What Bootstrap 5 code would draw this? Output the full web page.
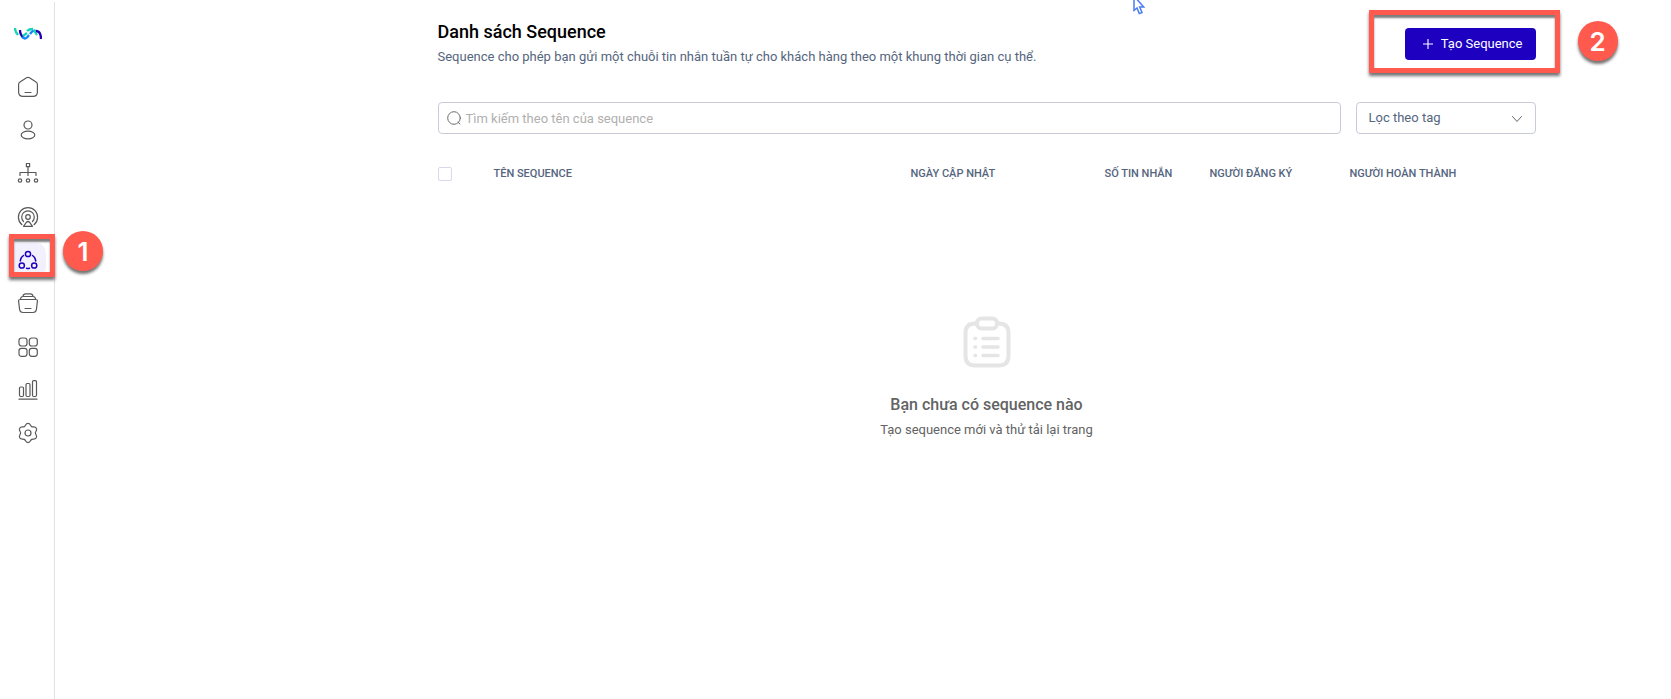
<!DOCTYPE html>
<html lang="vi">
<head>
<meta charset="utf-8">
<meta name="viewport" content="width=device-width, initial-scale=1">
<title>Danh sách Sequence</title>
<link href="https://cdn.jsdelivr.net/npm/bootstrap@5.3.0/dist/css/bootstrap.min.css" rel="stylesheet">
<style>
:root { --mark: #ff5a4d; --slate: #55657e; --brand: #1d00c0; }
body { font-family: Roboto, "Liberation Sans", sans-serif; font-size: 13px; line-height: 20px; color: #636363; }
svg { display: block; }
.rail { width: 55px; padding-left: 2px; border-right: 1px solid #e2e2e2; margin-top: 2px; }
.rail-logo { height: 63px; }
.rail-menu { display: grid; grid-auto-rows: 1fr; height: 390px; }
.rail-item { width: 36px; height: 34px; color: #595959; }
.rail-item.active { color: var(--brand); background: #f3f0fd; border-radius: 0 10px 10px 0; }
.rail-item svg { width: 22px; height: 22px; fill: none; stroke: currentColor; stroke-width: 1.2; stroke-linecap: round; stroke-linejoin: round; }
/* callouts laid over the page */
.mark-frame { position: absolute; border: 5px solid var(--mark); box-shadow: 0 3px 3px rgba(0,0,0,.55), inset 0 3px 2px rgba(0,0,0,.5); pointer-events: none; z-index: 3; }
.mark-dot { position: absolute; width: 40px; height: 40px; border-radius: 50%; background: var(--mark); color: #fff; font: 600 26px/42px Inter, "Liberation Sans", sans-serif; text-align: center; box-shadow: 0 3px 3px rgba(0,0,0,.55); z-index: 3; }
.frame-menu { inset: -9px -9px 0 -1px; }
.dot-menu { left: 53px; top: -12px; }
.frame-create { inset: -10px -24px -13px -36px; }
.dot-create { left: 173px; top: 1px; }
.workspace { padding-left: 247px; }
.sheet { max-width: 1098px; }
.page-head { padding-top: 20px; margin-bottom: 35px; }
.page-head h1 { font-size: 18px; line-height: 24px; font-weight: 500; color: #000; margin-bottom: 3px; }
.page-head p { color: var(--slate); }
.btn-create { width: 131px; height: 32px; background: var(--brand); color: #fff; font-size: 13px; border-radius: 4px; padding: 0 13px 0 16px; margin-top: 8px; }
.btn-create:hover { background: #2d12d0; color: #fff; }
.create-wrap { width: 131px; }
.filters { gap: 15px; }
.field { height: 32px; border: 1px solid #c9ccd6; border-radius: 4px; font-size: 13px; line-height: 20px; padding: 5px 12px; color: var(--slate); }
.search .field { padding-left: 27px; }
.search .field::placeholder { color: #b0b0b0; }
.search svg { position: absolute; left: 8px; top: 8px; }
.tag-filter { width: 180px; }
.tag-filter select { background: none; appearance: none; }
.tag-filter svg { position: absolute; right: 13px; top: 12px; pointer-events: none; }
.seq-table { table-layout: fixed; margin-top: 26px; }
.seq-table th { font-size: 11px; line-height: 16px; font-weight: 500; color: var(--slate); padding: 6px 0; border: 0; text-align: left; vertical-align: middle; white-space: nowrap; }
.seq-table .form-check-input { width: 14px; height: 14px; border: 1px solid #d5d9ea; border-radius: 2px; margin: 0; display: block; }
.empty { padding-top: 128px; }
.empty h2 { font-size: 16px; line-height: 24px; font-weight: 500; margin: 25px 0 3px; }
.pointer { position: absolute; left: 1132px; top: -5px; }
</style>
</head>
<body class="bg-white">
<div class="d-flex min-vh-100 position-relative">
  <nav class="rail flex-shrink-0" aria-label="Menu chính">
    <a href="#" class="rail-logo d-flex align-items-center justify-content-center" aria-label="Trang chủ">
      <svg width="28" height="14" viewBox="0 0 28 14" fill="none" stroke-width="2.3">
        <path d="M1 1c0 3 1 5 3 7" stroke="#16d5b4"/>
        <path d="M6 3c0 3 1 6 4 8" stroke="#2400b5"/>
        <path d="M9 9l4-3M13 4c2-2 4-2 6-2" stroke="#16d5b4"/>
        <path d="M8 10c3 3 5 1 7-2M16 7c2-3 4-4 6-3" stroke="#1587fb"/>
        <path d="M20 3c1 2 2 4 3 5" stroke="#16d5b4"/>
        <path d="M22 4c4 0 5 4 5 8" stroke="#2400b5"/>
      </svg>
    </a>
    <ul class="rail-menu list-unstyled mb-0">
      <li class="d-flex align-items-center justify-content-center"><a href="#" aria-label="Tổng quan" class="rail-item d-flex align-items-center justify-content-center">
        <svg viewBox="0 0 22 22"><path d="M1.600 8.500Q1.600 6.800 3 6l6.500-4.200Q11 1 12.500 1.800L19 6q1.400.8 1.400 2.500v7.500q0 4.400-4.400 4.400H6q-4.400 0-4.400-4.400zM8 16.500h6"/></svg></a></li>
      <li class="d-flex align-items-center justify-content-center"><a href="#" aria-label="Khách hàng" class="rail-item d-flex align-items-center justify-content-center">
        <svg viewBox="0 0 22 22"><circle cx="11" cy="6" r="4"/><ellipse cx="11" cy="16" rx="6.800" ry="3.800"/></svg></a></li>
      <li class="d-flex align-items-center justify-content-center"><a href="#" aria-label="Luồng" class="rail-item d-flex align-items-center justify-content-center">
        <svg viewBox="0 0 22 22"><rect x="9.400" y="1.500" width="3.200" height="3.200"/><circle cx="3" cy="18.500" r="1.700"/><circle cx="11" cy="18.500" r="1.700"/><circle cx="19" cy="18.500" r="1.700"/><path d="M11 5v8.500M3 13.500V10.500h16v3"/></svg></a></li>
      <li class="d-flex align-items-center justify-content-center"><a href="#" aria-label="Phát tin" class="rail-item d-flex align-items-center justify-content-center">
        <svg viewBox="0 0 22 22"><path d="M5 18.700a9.600 9.600 0 1 1 12 0M6.500 15.500a6.300 6.300 0 1 1 9 0"/><circle cx="11" cy="11" r="2.300"/><path d="M6.500 20.300l3-4.100q1.500-1.400 3 0l3 4.100z"/></svg></a></li>
      <li class="d-flex align-items-center justify-content-center">
        <div class="position-relative">
          <a href="#" aria-label="Sequence" aria-current="page" class="rail-item active d-flex align-items-center justify-content-center">
          <svg viewBox="0 0 22 22"><g stroke-width="1.500"><circle cx="11" cy="5" r="2.600"/><circle cx="4.800" cy="16.500" r="2.600"/><circle cx="17.200" cy="16.500" r="2.600"/><path d="M6.500 6.500q-3 2-3.200 5.500M15.500 6.500q3 2 3.200 5.500M9.500 19.200q1.500.5 3 0"/></g></svg></a>
          <span class="mark-frame frame-menu"></span>
          <span class="mark-dot dot-menu">1</span>
        </div></li>
      <li class="d-flex align-items-center justify-content-center"><a href="#" aria-label="Kho nội dung" class="rail-item d-flex align-items-center justify-content-center">
        <svg viewBox="0 0 22 22"><path d="M3 7.500h16q1.500 0 1.400 1.600l-1 8.400q-.4 3-3.400 3H6q-3 0-3.400-3l-1-8.400Q1.500 7.500 3 7.500zM3.500 7q.3-2.500 2.500-2.500h10q2.200 0 2.500 2.500M6 4.200Q6.500 1.800 8.500 1.800h5q2 0 2.500 2.400M8 16.500h6"/></svg></a></li>
      <li class="d-flex align-items-center justify-content-center"><a href="#" aria-label="Ứng dụng" class="rail-item d-flex align-items-center justify-content-center">
        <svg viewBox="0 0 22 22"><rect x="2" y="2" width="8" height="8" rx="2.500"/><rect x="12.300" y="2" width="8" height="8" rx="2.500"/><rect x="2" y="12.300" width="8" height="8" rx="2.500"/><rect x="12.300" y="12.300" width="8" height="8" rx="2.500"/></svg></a></li>
      <li class="d-flex align-items-center justify-content-center"><a href="#" aria-label="Thống kê" class="rail-item d-flex align-items-center justify-content-center">
        <svg viewBox="0 0 22 22"><rect x="2.500" y="8" width="4" height="9.500" rx="1.200"/><rect x="9" y="4.500" width="4" height="13" rx="1.200"/><rect x="15.500" y="1.600" width="4" height="15.900" rx="1.200"/><path d="M2 20.200h18"/></svg></a></li>
      <li class="d-flex align-items-center justify-content-center"><a href="#" aria-label="Cài đặt" class="rail-item d-flex align-items-center justify-content-center">
        <svg viewBox="0 0 22 22"><circle cx="11" cy="11" r="3"/><path d="M11 1.400C13.600 1.400 13.200 3.800 14.700 4.600C16.200 5.400 18 4 19.300 6.200C20.600 8.500 18.400 9.300 18.400 11C18.400 12.700 20.600 13.500 19.300 15.800C18 18 16.200 16.600 14.700 17.400C13.200 18.200 13.600 20.600 11 20.600C8.400 20.600 8.800 18.200 7.300 17.400C5.800 16.600 4 18 2.700 15.800C1.400 13.500 3.600 12.700 3.600 11C3.600 9.300 1.400 8.500 2.700 6.200C4 4 5.800 5.400 7.300 4.600C8.800 3.800 8.400 1.400 11 1.400z"/></svg></a></li>
    </ul>
  </nav>

  <main class="workspace flex-grow-1">
    <div class="sheet mx-auto">
      <header class="page-head d-flex justify-content-between align-items-start">
        <div>
          <h1>Danh sách Sequence</h1>
          <p class="mb-0">Sequence cho phép bạn gửi một chuỗi tin nhắn tuần tự cho khách hàng theo một khung thời gian cụ thể.</p>
        </div>
        <div class="create-wrap position-relative">
          <button type="button" class="btn btn-create border-0 d-flex align-items-center justify-content-between">
            <svg width="14" height="14" viewBox="0 0 14 14" stroke="#fff" stroke-width="1.100"><path d="M2 7h10M7 2v10"/></svg>
            <span>Tạo Sequence</span>
          </button>
          <span class="mark-frame frame-create"></span>
          <span class="mark-dot dot-create">2</span>
        </div>
      </header>

      <form class="filters d-flex">
        <div class="search position-relative flex-grow-1">
          <input type="search" class="field form-control" placeholder="Tìm kiếm theo tên của sequence" aria-label="Tìm kiếm theo tên của sequence">
          <svg width="16" height="16" viewBox="0 0 16 16" fill="none" stroke="#6f6f6f" stroke-linecap="round"><circle cx="8" cy="8" r="6.300"/><path d="M12 12.300l2 1.700"/></svg>
        </div>
        <div class="tag-filter position-relative flex-shrink-0">
          <select class="field form-select" aria-label="Lọc theo tag"><option>Lọc theo tag</option></select>
          <svg width="12" height="10" viewBox="0 0 12 10" fill="none" stroke="#666" stroke-linecap="round" stroke-linejoin="round"><path d="M1.500 2.500L6 7.500l4.500-5"/></svg>
        </div>
      </form>

      <table class="seq-table table table-borderless mb-0">
        <colgroup><col style="width:56px"><col><col style="width:194px"><col style="width:105px"><col style="width:140px"><col style="width:186px"></colgroup>
        <thead>
          <tr>
            <th scope="col"><input class="form-check-input" type="checkbox" aria-label="Chọn tất cả"></th>
            <th scope="col">TÊN SEQUENCE</th>
            <th scope="col">NGÀY CẬP NHẬT</th>
            <th scope="col">SỐ TIN NHẮN</th>
            <th scope="col">NGƯỜI ĐĂNG KÝ</th>
            <th scope="col">NGƯỜI HOÀN THÀNH</th>
          </tr>
        </thead>
      </table>

      <section class="empty text-center">
        <svg class="mx-auto" width="48" height="52" viewBox="0 0 48 52" fill="none" stroke="#e5e5e5" stroke-width="4" stroke-linecap="round" stroke-linejoin="round">
          <path d="M13 7.500h-1Q2.500 7.500 2.500 17v22.500Q2.500 49.500 12 49.500h24q9.500 0 9.500-10V17Q45.500 7.500 36 7.500h-1"/>
          <rect x="14" y="2.500" width="20" height="10" rx="4.500"/>
          <path d="M20 22.500h15M20 31h15M20 39.500h15M12 22.500h.5M12 31h.5M12 39.500h.5" stroke-width="3.600"/>
        </svg>
        <h2>Bạn chưa có sequence nào</h2>
        <p class="mb-0">Tạo sequence mới và thử tải lại trang</p>
      </section>
    </div>
  </main>

  <svg class="pointer" width="14" height="21" viewBox="0 0 14 21" fill="#fff" stroke="#4a7cf0" stroke-width="1.500" aria-hidden="true"><path d="M2 1v14.500l3-2.500 2.300 5.600 2.700-1.100-2.300-5.500h4z"/></svg>
</div>
<script src="https://cdn.jsdelivr.net/npm/bootstrap@5.3.0/dist/js/bootstrap.bundle.min.js"></script>
</body>
</html>
